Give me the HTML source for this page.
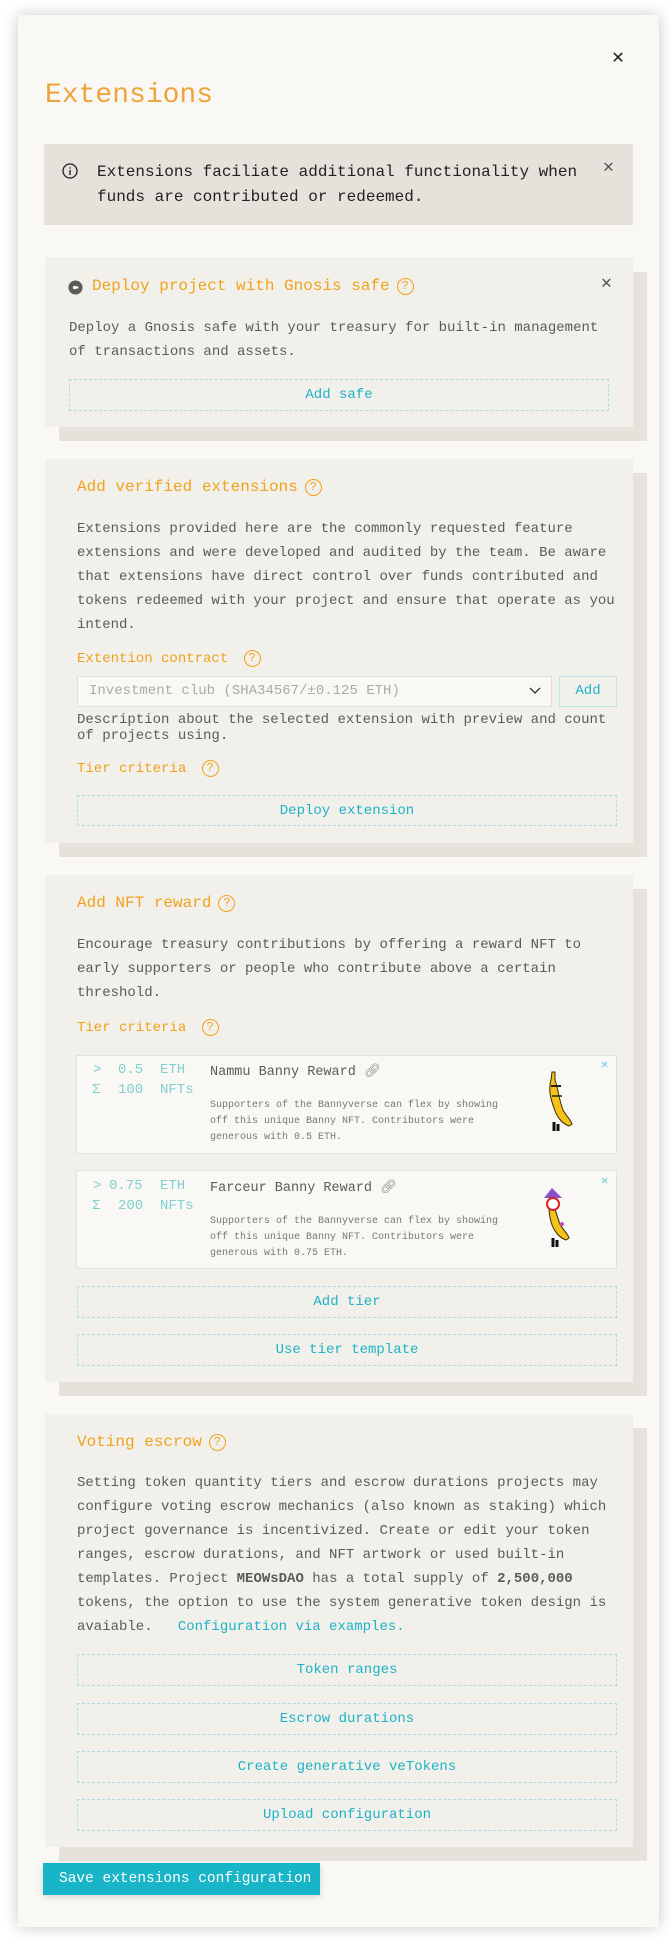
<!DOCTYPE html>
<html><head><meta charset="utf-8"><style>
*{box-sizing:border-box;margin:0;padding:0}
body{width:672px;height:1943px;background:#fff;font-family:"Liberation Mono","DejaVu Sans Mono",monospace;position:relative;overflow:hidden;color:#555}
.a{position:absolute;white-space:nowrap}
.modal{position:absolute;left:18px;top:15px;width:641px;height:1912px;background:#f9f8f4;box-shadow:0 0 14px rgba(0,0,0,.22)}
.card{position:absolute;left:45px;width:588px;background:#f2f0eb}
.sh{position:absolute;left:59px;width:588px;background:#e6e1db}
.t{font-size:16px;color:#f0a21c}
.d{font-size:14px;color:#5c5b58;line-height:24px}
.btn{position:absolute;left:77px;width:540px;height:32px;border:1px dashed #a9dfe4;color:#1cb3c6;font-size:14px;text-align:center;line-height:30px}
.q{display:inline-block;width:17px;height:17px;border:1.5px solid #f0a21c;border-radius:50%;font-size:12px;line-height:14px;text-align:center;color:#f0a21c;vertical-align:1px;margin-left:7px}
.tier{position:absolute;left:76px;width:541px;height:100px;background:#f9f8f4;border:1px solid #e4e1dc}
.tc{font-size:14px;color:#80d0d0}
.tn{font-size:13.5px;color:#5c5b58}
.ts{font-size:10px;color:#777;line-height:16px}
.x{font-size:12px;color:#5fd0e0}
</style></head><body>
<div class="modal"></div>
<div class="a" style="left:612px;top:44px;font-size:20px;color:#222">✕</div>
<div class="a" style="left:45px;top:80px;font-size:28px;color:#eda43c">Extensions</div>

<div class="a" style="left:44px;top:144px;width:589px;height:81px;background:#e6e1db"></div>
<svg class="a" style="left:62px;top:163px" width="16" height="16" viewBox="0 0 16 16"><circle cx="8" cy="8" r="7" fill="none" stroke="#222" stroke-width="1.3"/><path d="M8 7v5M8 4.2v1.4" stroke="#222" stroke-width="1.4"/></svg>
<div class="a" style="left:97px;top:160px;font-size:16px;line-height:25px;color:#222">Extensions faciliate additional functionality when<br>funds are contributed or redeemed.</div>
<div class="a" style="left:603px;top:156px;font-size:18px;color:#555">✕</div>

<div class="sh" style="top:272px;height:169px"></div>
<div class="card" style="top:257px;height:170px"></div>
<svg class="a" style="left:68px;top:280px" width="15" height="15" viewBox="0 0 16 16"><circle cx="8" cy="8" r="7.5" fill="#5c5b58"/><path d="M6 8h5" stroke="#fff" stroke-width="2.4"/><circle cx="7" cy="8" r="1.8" fill="#fff"/></svg>
<div class="a t" style="left:92px;top:277px">Deploy project with Gnosis safe<span class="q">?</span></div>
<div class="a" style="left:601px;top:272px;font-size:18px;color:#555">✕</div>
<div class="a d" style="left:69px;top:316px">Deploy a Gnosis safe with your treasury for built-in management<br>of transactions and assets.</div>
<div class="btn" style="left:69px;width:540px;top:379px;height:32px">Add safe</div>

<div class="sh" style="top:473px;height:384px"></div>
<div class="card" style="top:459px;height:384px"></div>
<div class="a t" style="left:77px;top:478px">Add verified extensions<span class="q">?</span></div>
<div class="a d" style="left:77px;top:517px">Extensions provided here are the commonly requested feature<br>extensions and were developed and audited by the team. Be aware<br>that extensions have direct control over funds contributed and<br>tokens redeemed with your project and ensure that operate as you<br>intend.</div>
<div class="a t" style="left:77px;top:650px;font-size:14px">Extention contract <span class="q">?</span></div>
<div class="a" style="left:77px;top:676px;width:475px;height:31px;background:#f9f8f4;border:1px solid #e2dfda"></div>
<div class="a" style="left:89px;top:683px;font-size:14px;color:#aaa">Investment club (SHA34567/±0.125 ETH)</div>
<svg class="a" style="left:529px;top:687px" width="12" height="8" viewBox="0 0 12 8"><path d="M1 1l5 5 5-5" fill="none" stroke="#333" stroke-width="1.3"/></svg>
<div class="a" style="left:559px;top:676px;width:58px;height:31px;border:1.5px solid #bde6ea;color:#1cb3c6;font-size:14px;text-align:center;line-height:28px">Add</div>
<div class="a d" style="left:77px;top:712px;line-height:16px">Description about the selected extension with preview and count<br>of projects using.</div>
<div class="a t" style="left:77px;top:760px;font-size:14px">Tier criteria  <span class="q">?</span></div>
<div class="btn" style="top:795px;height:31px">Deploy extension</div>

<div class="sh" style="top:889px;height:507px"></div>
<div class="card" style="top:875px;height:507px"></div>
<div class="a t" style="left:77px;top:894px">Add NFT reward<span class="q">?</span></div>
<div class="a d" style="left:77px;top:933px">Encourage treasury contributions by offering a reward NFT to<br>early supporters or people who contribute above a certain<br>threshold.</div>
<div class="a t" style="left:77px;top:1019px;font-size:14px">Tier criteria  <span class="q">?</span></div>

<div class="tier" style="top:1055px;height:99px"></div>
<div class="a tc" style="left:93px;top:1062px">&gt;</div><div class="a tc" style="left:118px;top:1062px">0.5</div><div class="a tc" style="left:160px;top:1062px">ETH</div>
<div class="a tc" style="left:92px;top:1082px">Σ</div><div class="a tc" style="left:118px;top:1082px">100</div><div class="a tc" style="left:160px;top:1082px">NFTs</div>
<div class="a tn" style="left:210px;top:1063px">Nammu Banny Reward <span style="color:#888">🔗︎</span></div>
<div class="a ts" style="left:210px;top:1098px">Supporters of the Bannyverse can flex by showing<br>off this unique Banny NFT. Contributors were<br>generous with 0.5 ETH.</div>
<div class="a x" style="left:601px;top:1057px">✕</div>
<svg class="a" style="left:542px;top:1070px" width="32" height="64" viewBox="0 0 32 64"><path d="M10 2h3v8c3 8 4 20 8 30 3 6 8 10 9 14l-3 2c-6-2-12-8-15-18C9 30 6 20 9 10z" fill="#f5c21b" stroke="#3a2a00" stroke-width="1"/><path d="M9 16h10" stroke="#222" stroke-width="2"/><path d="M10 26h10" stroke="#222" stroke-width="1.5"/><path d="M12 52v9M16 54v7" stroke="#111" stroke-width="3"/></svg>

<div class="tier" style="top:1170px;height:99px"></div>
<div class="a tc" style="left:93px;top:1178px">&gt;</div><div class="a tc" style="left:109px;top:1178px">0.75</div><div class="a tc" style="left:160px;top:1178px">ETH</div>
<div class="a tc" style="left:92px;top:1198px">Σ</div><div class="a tc" style="left:118px;top:1198px">200</div><div class="a tc" style="left:160px;top:1198px">NFTs</div>
<div class="a tn" style="left:210px;top:1179px">Farceur Banny Reward <span style="color:#888">🔗︎</span></div>
<div class="a ts" style="left:210px;top:1214px">Supporters of the Bannyverse can flex by showing<br>off this unique Banny NFT. Contributors were<br>generous with 0.75 ETH.</div>
<div class="a x" style="left:601px;top:1173px">✕</div>
<svg class="a" style="left:540px;top:1186px" width="34" height="64" viewBox="0 0 34 64"><path d="M11 10c3 8 5 18 9 28 3 6 8 10 9 14l-3 2c-6-2-12-8-15-18C9 28 8 18 11 10z" fill="#f5c21b" stroke="#3a2a00" stroke-width="1"/><path d="M4 12l8-10 10 10z" fill="#8b4fc9"/><circle cx="13" cy="18" r="6" fill="#fff" stroke="#d22" stroke-width="2"/><circle cx="22" cy="38" r="2" fill="#c050c0"/><path d="M13 52v9M17 54v7" stroke="#111" stroke-width="3"/></svg>

<div class="btn" style="top:1286px">Add tier</div>
<div class="btn" style="top:1334px">Use tier template</div>

<div class="sh" style="top:1428px;height:433px"></div>
<div class="card" style="top:1414px;height:433px"></div>
<div class="a t" style="left:77px;top:1433px">Voting escrow<span class="q">?</span></div>
<div class="a d" style="left:77px;top:1471px">Setting token quantity tiers and escrow durations projects may<br>configure voting escrow mechanics (also known as staking) which<br>project governance is incentivized. Create or edit your token<br>ranges, escrow durations, and NFT artwork or used built-in<br>templates. Project <b>MEOWsDAO</b> has a total supply of <b>2,500,000</b><br>tokens, the option to use the system generative token design is<br>avaiable.&nbsp;&nbsp; <span style="color:#1cb3c6">Configuration via examples.</span></div>
<div class="btn" style="top:1654px">Token ranges</div>
<div class="btn" style="top:1703px">Escrow durations</div>
<div class="btn" style="top:1751px">Create generative veTokens</div>
<div class="btn" style="top:1799px">Upload configuration</div>

<div class="a" style="left:43px;top:1863px;width:277px;height:32px;background:#18b4c7;color:#fff;font-size:14.5px;line-height:32px;padding-left:16px;box-shadow:0 2px 6px rgba(0,0,0,.15)">Save extensions configuration</div>
</body></html>
